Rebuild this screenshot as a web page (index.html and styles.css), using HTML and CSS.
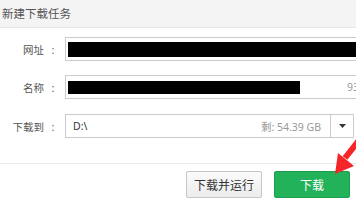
FILE: index.html
```html
<html lang="zh-CN">

<head>
    <meta charset="UTF-8">
    <meta name="viewport" content="width=device-width, initial-scale=1.0">
    <title>新建下载任务</title>
    <link rel="stylesheet" href="styles.css">
</head>

<body>
    <div class="dialog">
        <div class="titlebar">新建下载任务</div>

        <div class="form">
            <div class="row">
                <label class="label">网址</label><span class="colon">:</span>
                <div class="field wide">
                    <span class="mask mask-url"></span>
                </div>
            </div>
            <div class="row">
                <label class="label">名称</label><span class="colon">:</span>
                <div class="field wide">
                    <span class="mask mask-name"></span>
                    <span class="size">93.5 MB</span>
                </div>
            </div>
            <div class="row row-path">
                <label class="label">下载到</label><span class="colon">:</span>
                <div class="field path">
                    <span class="path-text">D:\</span>
                    <span class="free">剩: 54.39 GB</span>
                    <span class="drop">
                        <svg width="7" height="4" viewBox="0 0 7 4"><path d="M0 0 H7 L3.5 4 Z" fill="#333"/></svg>
                    </span>
                </div>
            </div>
        </div>

        <div class="footer">
            <button class="btn btn-plain">下载并运行</button>
            <button class="btn btn-green">下载</button>
        </div>

        <svg class="arrow" width="30" height="45" viewBox="328 135 30 45">
            <line x1="360" y1="139" x2="345" y2="158" stroke="#f5262a" stroke-width="6"/>
            <polygon points="335,174 338,153 354,166" fill="#f5262a"/>
        </svg>
    </div>
</body>
</html>
```

FILE: styles.css
```css
body {
    margin: 0;
    background: #fff;
    overflow: hidden;
    font-family: "Noto Sans", "Noto Sans CJK SC", sans-serif;
}

.dialog {
    position: relative;
    width: 356px;
    height: 205px;
}

.titlebar {
    height: 27px;
    line-height: 27px;
    padding-left: 2px;
    background: #f4f4f4;
    border-bottom: 1px solid #e6e6e6;
    font-size: 11.5px;
    color: #555;
}

.form {
    display: flex;
    flex-direction: column;
    gap: 14px;
    padding-top: 9px;
}

.row {
    display: flex;
    align-items: center;
}

.row-path {
    margin-top: 1px;
}

.label {
    width: 44px;
    text-align: right;
    font-size: 10.5px;
    color: #555;
}

.colon {
    width: 18px;
    margin-right: 3px;
    text-align: center;
    font-size: 11px;
    color: #666;
}

.field {
    flex: 1;
    display: flex;
    align-items: center;
    height: 24px;
    box-sizing: border-box;
    border: 1px solid #cbcbcb;
    background: #fff;
    padding: 0 2px;
}

.field.wide {
    margin-right: -80px;
}

.mask {
    display: block;
    background: #000;
}

.mask-url {
    flex: 1;
    height: 15px;
}

.mask-name {
    width: 232px;
    height: 13px;
}

.size {
    margin-left: 47px;
    font-size: 10.5px;
    color: #999;
}

.field.path {
    margin-right: 2px;
    padding: 0 0 0 7px;
    font-size: 10.5px;
}

.path-text {
    flex: 1;
    color: #333;
}

.free {
    margin-right: 9px;
    color: #999;
}

.drop {
    width: 22px;
    height: 100%;
    border-left: 1px solid #cbcbcb;
    display: flex;
    align-items: center;
    justify-content: center;
}

.footer {
    display: flex;
    justify-content: flex-end;
    gap: 12px;
    margin-top: 25px;
    padding: 7px 6px 0 0;
    border-top: 1px solid #ececec;
}

.btn {
    width: 76px;
    height: 27px;
    border-radius: 2px;
    font-family: inherit;
    font-size: 12px;
    cursor: pointer;
}

.btn-plain {
    border: 1px solid #c6c6c6;
    background: linear-gradient(#fbfbfb, #ececec);
    color: #333;
}

.btn-green {
    border: 1px solid #1e9e4c;
    background: #22b35a;
    color: #fff;
}

.arrow {
    position: absolute;
    left: 328px;
    top: 135px;
}
```
